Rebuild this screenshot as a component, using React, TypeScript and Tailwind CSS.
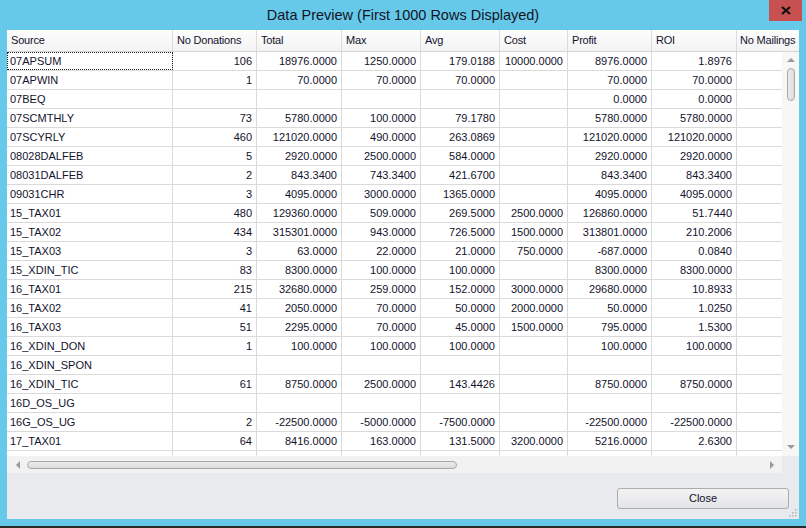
import type { ReactNode } from "react";

const FONT = { fontFamily: '"Liberation Sans", Arial, sans-serif' };

// widths include the 1px right grid line
const COLUMNS = [
  { name: "Source", width: "w-[166px]", align: "left" },
  { name: "No Donations", width: "w-[84px]", align: "right" },
  { name: "Total", width: "w-[85px]", align: "right" },
  { name: "Max", width: "w-[79px]", align: "right" },
  { name: "Avg", width: "w-[79px]", align: "right" },
  { name: "Cost", width: "w-[68px]", align: "right" },
  { name: "Profit", width: "w-[84px]", align: "right" },
  { name: "ROI", width: "w-[85px]", align: "right" },
] as const;

const ROWS: string[][] = [
  ["07APSUM", "106", "18976.0000", "1250.0000", "179.0188", "10000.0000", "8976.0000", "1.8976"],
  ["07APWIN", "1", "70.0000", "70.0000", "70.0000", "", "70.0000", "70.0000"],
  ["07BEQ", "", "", "", "", "", "0.0000", "0.0000"],
  ["07SCMTHLY", "73", "5780.0000", "100.0000", "79.1780", "", "5780.0000", "5780.0000"],
  ["07SCYRLY", "460", "121020.0000", "490.0000", "263.0869", "", "121020.0000", "121020.0000"],
  ["08028DALFEB", "5", "2920.0000", "2500.0000", "584.0000", "", "2920.0000", "2920.0000"],
  ["08031DALFEB", "2", "843.3400", "743.3400", "421.6700", "", "843.3400", "843.3400"],
  ["09031CHR", "3", "4095.0000", "3000.0000", "1365.0000", "", "4095.0000", "4095.0000"],
  ["15_TAX01", "480", "129360.0000", "509.0000", "269.5000", "2500.0000", "126860.0000", "51.7440"],
  ["15_TAX02", "434", "315301.0000", "943.0000", "726.5000", "1500.0000", "313801.0000", "210.2006"],
  ["15_TAX03", "3", "63.0000", "22.0000", "21.0000", "750.0000", "-687.0000", "0.0840"],
  ["15_XDIN_TIC", "83", "8300.0000", "100.0000", "100.0000", "", "8300.0000", "8300.0000"],
  ["16_TAX01", "215", "32680.0000", "259.0000", "152.0000", "3000.0000", "29680.0000", "10.8933"],
  ["16_TAX02", "41", "2050.0000", "70.0000", "50.0000", "2000.0000", "50.0000", "1.0250"],
  ["16_TAX03", "51", "2295.0000", "70.0000", "45.0000", "1500.0000", "795.0000", "1.5300"],
  ["16_XDIN_DON", "1", "100.0000", "100.0000", "100.0000", "", "100.0000", "100.0000"],
  ["16_XDIN_SPON", "", "", "", "", "", "", ""],
  ["16_XDIN_TIC", "61", "8750.0000", "2500.0000", "143.4426", "", "8750.0000", "8750.0000"],
  ["16D_OS_UG", "", "", "", "", "", "", ""],
  ["16G_OS_UG", "2", "-22500.0000", "-5000.0000", "-7500.0000", "", "-22500.0000", "-22500.0000"],
  ["17_TAX01", "64", "8416.0000", "163.0000", "131.5000", "3200.0000", "5216.0000", "2.6300"],
];

function Cell({ width, align, children, focused }: { width: string; align: string; children?: ReactNode; focused?: boolean }) {
  return (
    <div
      className={`${width} shrink-0 h-full border-r border-[#dadada] px-[3px] flex items-center overflow-hidden whitespace-nowrap ${
        align === "right" ? "justify-end pr-[4px]" : "justify-start"
      } ${focused ? "outline outline-1 outline-dotted outline-[#222] -outline-offset-1" : ""}`}
    >
      {children}
    </div>
  );
}

function Arrow({ dir }: { dir: "up" | "down" | "left" | "right" }) {
  const points = {
    up: "0,4 4,0 8,4",
    down: "0,0 8,0 4,4",
    left: "4,0 4,8 0,4",
    right: "0,0 0,8 4,4",
  }[dir];
  const vertical = dir === "up" || dir === "down";
  return (
    <svg width={vertical ? 8 : 4} height={vertical ? 4 : 8} viewBox={vertical ? "0 0 8 4" : "0 0 4 8"} aria-hidden="true">
      <polygon points={points} fill="#9a9a9a" />
    </svg>
  );
}

export default function App() {
  return (
    <div className="w-[806px] h-[528px] bg-[#66c9ea] flex flex-col text-[#12122c]" style={FONT}>
      {/* title bar */}
      <div className="relative h-[30px] shrink-0 flex items-center justify-center">
        <span className="text-[14.5px] text-[#141424] pt-[2px]">Data Preview (First 1000 Rows Displayed)</span>
        <div className="absolute right-[4px] top-0 w-[33px] h-[21px] bg-[#c75050] flex items-center justify-center">
          <svg width="10" height="9" viewBox="0 0 10 9" aria-hidden="true">
            <path d="M1 1l8 7M9 1l-8 7" stroke="#111" strokeWidth="2.2" />
          </svg>
        </div>
      </div>

      {/* client area */}
      <div className="mx-[7px] h-[489px] shrink-0 bg-[#e9eaee] flex flex-col text-[11px]">
        {/* header */}
        <div className="h-[22px] shrink-0 flex bg-gradient-to-b from-[#fdfdfd] to-[#f3f3f4] border-b border-[#d5d5d8] tracking-[-0.2px]">
          {COLUMNS.map((col) => (
            <div
              key={col.name}
              className={`${col.width} shrink-0 h-full border-r border-[#dcdcdf] pl-[4px] flex items-center whitespace-nowrap`}
            >
              {col.name}
            </div>
          ))}
          <div className="flex-1 pl-[3px] flex items-center whitespace-nowrap overflow-hidden">No Mailings</div>
        </div>

        {/* body + vertical scrollbar */}
        <div className="h-[404px] shrink-0 flex">
          <div className="w-[775px] shrink-0 bg-white overflow-hidden">
            {ROWS.map((row, r) => (
              <div key={row[0]} className="h-[19px] flex border-b border-[#dadada]">
                {COLUMNS.map((col, c) => (
                  <Cell key={col.name} width={col.width} align={col.align} focused={r === 0 && c === 0}>
                    {row[c]}
                  </Cell>
                ))}
                <div className="flex-1" />
              </div>
            ))}
            <div className="h-[5px] flex">
              {COLUMNS.map((col) => (
                <Cell key={col.name} width={col.width} align={col.align} />
              ))}
            </div>
          </div>
          <div className="w-[17px] shrink-0 bg-[#f7f7f7] flex flex-col items-center">
            <div className="h-[16px] flex items-center justify-center">
              <Arrow dir="up" />
            </div>
            <div className="w-[8px] h-[33px] rounded-full border border-[#a8a8a8] bg-gradient-to-r from-[#ececec] to-[#dcdcdc]" />
            <div className="flex-1" />
            <div className="h-[16px] flex items-center justify-center pb-[2px]">
              <Arrow dir="down" />
            </div>
          </div>
        </div>

        {/* horizontal scrollbar */}
        <div className="h-[17px] shrink-0 flex">
          <div className="w-[775px] shrink-0 bg-[#f2f2f3] flex items-center">
            <div className="w-[20px] flex justify-center pl-[2px]">
              <Arrow dir="left" />
            </div>
            <div className="w-[430px] h-[8px] rounded-full border border-[#a8a8a8] bg-gradient-to-b from-[#ececec] to-[#dcdcdc]" />
            <div className="flex-1" />
            <div className="w-[16px] flex justify-center pr-[4px]">
              <Arrow dir="right" />
            </div>
          </div>
          <div className="flex-1" />
        </div>

        {/* footer */}
        <div className="relative flex-1 flex justify-end items-start pt-[15px] pr-[10px]">
          <button
            type="button"
            className="w-[172px] h-[21px] rounded-[3px] border border-[#acacac] bg-gradient-to-b from-[#f3f3f3] to-[#e3e4e7] text-[11px] text-[#12122c] flex items-center justify-center"
          >
            Close
          </button>
          <svg className="absolute right-[2px] bottom-[2px]" width="8" height="8" viewBox="0 0 8 8" aria-hidden="true">
            <g fill="#b4b4b4">
              <rect x="6" y="0" width="1.5" height="1.5" />
              <rect x="3" y="3" width="1.5" height="1.5" />
              <rect x="6" y="3" width="1.5" height="1.5" />
              <rect x="0" y="6" width="1.5" height="1.5" />
              <rect x="3" y="6" width="1.5" height="1.5" />
              <rect x="6" y="6" width="1.5" height="1.5" />
            </g>
          </svg>
        </div>
      </div>

      <div className="flex-1" />
      <div className="h-[2px] bg-[#2b2b2b]" />
    </div>
  );
}
